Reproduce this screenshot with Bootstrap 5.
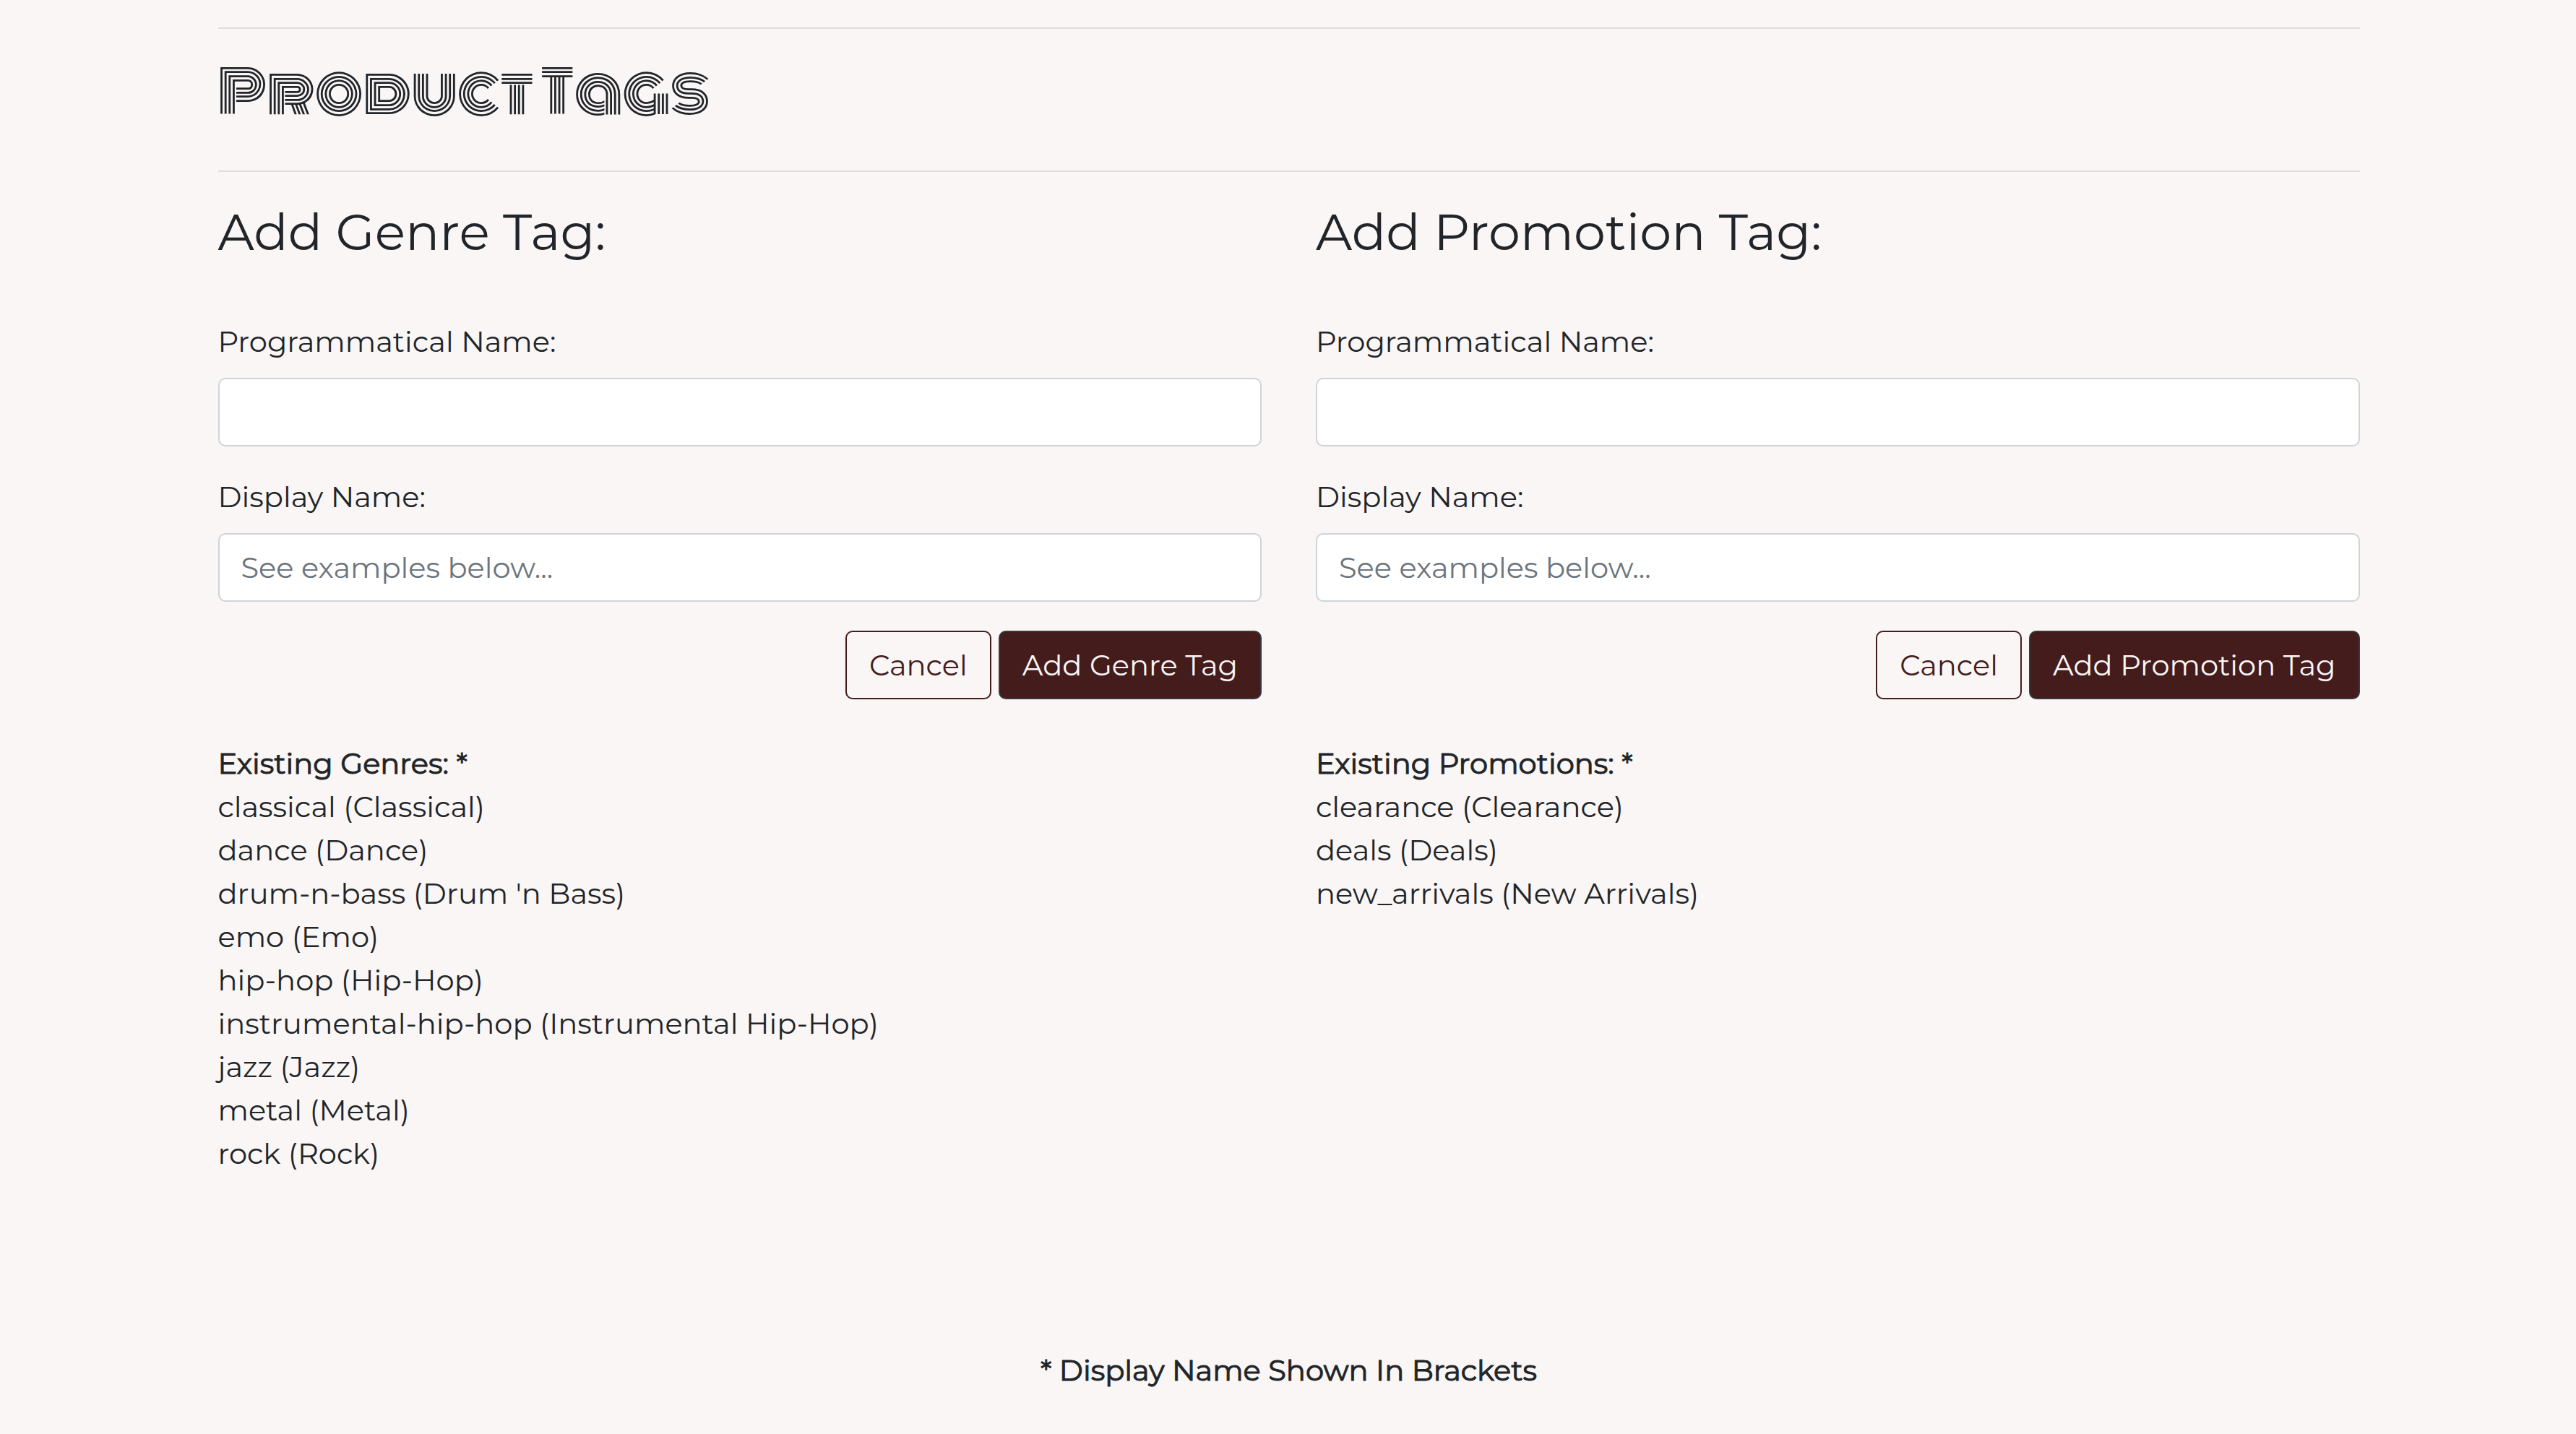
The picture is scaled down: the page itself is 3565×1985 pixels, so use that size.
<!DOCTYPE html>
<html lang="en">
<head>
<meta charset="utf-8">
<meta name="viewport" content="width=device-width, initial-scale=1">
<title>Product Tags</title>
<link href="https://cdn.jsdelivr.net/npm/bootstrap@5.3.0/dist/css/bootstrap.min.css" rel="stylesheet">
<style>
  body { background: #faf6f5; color: #212529; font-family: Montserrat, Inter, sans-serif; font-size: 40px; font-weight: 400; line-height: 60px; }
  .page-wrap { max-width: 3040px; padding: 38px 37px 0 39px; }
  .rule { margin: 0; border-top: 2px solid #000; opacity: .1; }
  .brand-title { margin: 0; padding: 40px 0 60px; font-family: Monoton, Montserrat, Inter, sans-serif; font-size: 80px; font-weight: 400; line-height: 96px; color: #212529; }
  .tag-cols { --bs-gutter-x: 75px; padding-top: 41px; }
  .tag-cols h2 { margin: 0 0 80px; font-size: 70px; font-weight: 400; line-height: 84px; }
  .form-label { display: block; margin: 0 0 20px; }
  .form-control { height: 95px; margin-bottom: 40px; padding: 0 30px; border: 2px solid #ced4da; border-radius: 10px; font-size: 40px; line-height: 60px; color: #212529; }
  .form-control::placeholder { color: #6c757d; }
  .actions { gap: 10px; margin-bottom: 59px; }
  .actions .btn { height: 95px; padding: 0 31px; border-width: 2px; border-radius: 10px; font-size: 40px; line-height: 60px; }
  .btn-plain { --bs-btn-color: #441c1c; --bs-btn-border-color: #441c1c; --bs-btn-hover-color: #fff; --bs-btn-hover-bg: #441c1c; }
  .btn-wine { --bs-btn-color: #faf6f5; --bs-btn-bg: #441c1c; --bs-btn-border-color: #343a40; --bs-btn-hover-color: #fff; --bs-btn-hover-bg: #5a2727; }
  .strong-line { margin: 0; -webkit-text-stroke: 1px currentColor; }
  .foot-note { padding: 240px 0 58px; }
</style>
<script src="https://cdn.jsdelivr.net/npm/bootstrap@5.3.0/dist/js/bootstrap.bundle.min.js"></script>
</head>
<body>
<main class="container-fluid page-wrap">
  <header>
    <hr class="rule">
    <h1 class="brand-title">Product Tags</h1>
    <hr class="rule">
  </header>
  <div class="row tag-cols">
    <section class="col-6">
      <h2>Add Genre Tag:</h2>
      <form>
        <label class="form-label" for="genre-name">Programmatical Name:</label>
        <input class="form-control" type="text" id="genre-name">
        <label class="form-label" for="genre-display">Display Name:</label>
        <input class="form-control" type="text" id="genre-display" placeholder="See examples below...">
        <div class="d-flex justify-content-end actions">
          <button type="button" class="btn btn-plain">Cancel</button>
          <button type="submit" class="btn btn-wine">Add Genre Tag</button>
        </div>
      </form>
      <p class="strong-line">Existing Genres: *</p>
      <ul class="list-unstyled mb-0">
        <li>classical (Classical)</li>
        <li>dance (Dance)</li>
        <li>drum-n-bass (Drum 'n Bass)</li>
        <li>emo (Emo)</li>
        <li>hip-hop (Hip-Hop)</li>
        <li>instrumental-hip-hop (Instrumental Hip-Hop)</li>
        <li>jazz (Jazz)</li>
        <li>metal (Metal)</li>
        <li>rock (Rock)</li>
      </ul>
    </section>
    <section class="col-6">
      <h2>Add Promotion Tag:</h2>
      <form>
        <label class="form-label" for="promo-name">Programmatical Name:</label>
        <input class="form-control" type="text" id="promo-name">
        <label class="form-label" for="promo-display">Display Name:</label>
        <input class="form-control" type="text" id="promo-display" placeholder="See examples below...">
        <div class="d-flex justify-content-end actions">
          <button type="button" class="btn btn-plain">Cancel</button>
          <button type="submit" class="btn btn-wine">Add Promotion Tag</button>
        </div>
      </form>
      <p class="strong-line">Existing Promotions: *</p>
      <ul class="list-unstyled mb-0">
        <li>clearance (Clearance)</li>
        <li>deals (Deals)</li>
        <li>new_arrivals (New Arrivals)</li>
      </ul>
    </section>
  </div>
  <footer class="text-center foot-note">
    <p class="strong-line">* Display Name Shown In Brackets</p>
  </footer>
</main>
</body>
</html>
